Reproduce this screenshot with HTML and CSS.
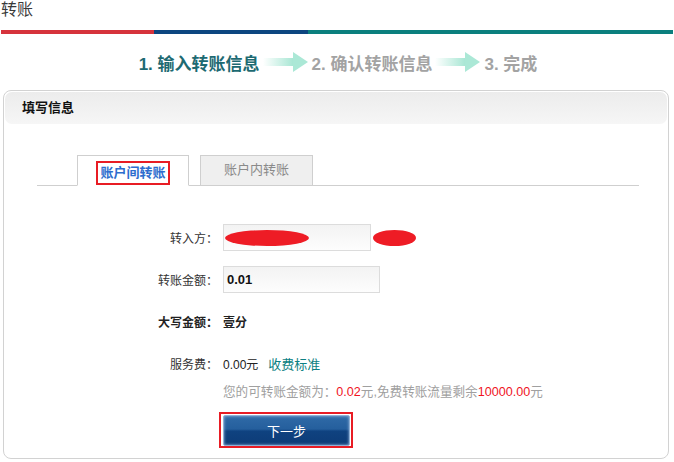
FILE: index.html
```html
<!DOCTYPE html>
<html lang="zh-CN">
<head>
<meta charset="utf-8">
<title>转账</title>
<link rel="stylesheet" href="styles.css">
</head>
<body>
<div class="page">
  <h1 class="title">转账</h1>
  <div class="bar"><span class="bar-red"></span><span class="bar-navy"></span><span class="bar-teal"></span></div>
  <div class="steps">
    <span class="step step-active">1. 输入转账信息</span>
    <svg class="arrow" width="46" height="22" viewBox="0 0 46 22">
      <defs><linearGradient id="ag1" x1="0" x2="1" y1="0" y2="0"><stop offset="0" stop-color="#ffffff"/><stop offset="1" stop-color="#a6e6d3"/></linearGradient></defs>
      <rect x="0" y="7" width="31" height="8" fill="url(#ag1)"/>
      <polygon points="30,1 45,11 30,21" fill="#abe8d6"/>
    </svg>
    <span class="step">2. 确认转账信息</span>
    <svg class="arrow" width="46" height="22" viewBox="0 0 46 22">
      <defs><linearGradient id="ag2" x1="0" x2="1" y1="0" y2="0"><stop offset="0" stop-color="#ffffff"/><stop offset="1" stop-color="#a6e6d3"/></linearGradient></defs>
      <rect x="0" y="7" width="31" height="8" fill="url(#ag2)"/>
      <polygon points="30,1 45,11 30,21" fill="#abe8d6"/>
    </svg>
    <span class="step">3. 完成</span>
  </div>
  <section class="panel">
    <div class="panel-head">填写信息</div>
    <div class="tabs">
      <div class="tab tab-active"><span class="mark">账户间转账</span></div>
      <div class="tab">账户内转账</div>
    </div>
    <div class="form">
      <div class="row">
        <span class="label">转入方：</span>
        <div class="input input-from"><span class="scribble scribble-a"></span></div>
        <span class="scribble scribble-b"></span>
      </div>
      <div class="row">
        <span class="label">转账金额：</span>
        <div class="input input-amount"><span class="amount">0.01</span></div>
      </div>
      <div class="row">
        <span class="label label-bold">大写金额：</span>
        <span class="value-bold">壹分</span>
      </div>
      <div class="row">
        <span class="label">服务费：</span>
        <span class="fee">0.00元</span>
        <a class="fee-link">收费标准</a>
      </div>
      <p class="info">您的可转账金额为：<span class="num">0.02</span>元,免费转账流量剩余<span class="num">10000.00</span>元</p>
      <div class="btn-mark"><button class="btn">下一步</button></div>
    </div>
  </section>
</div>
</body>
</html>
```
FILE: styles.css
```css
* { box-sizing: border-box; }
html, body { margin: 0; padding: 0; background: #fff; }
body {
  font-family: "Liberation Sans", "Noto Sans CJK SC", sans-serif;
  font-size: 12px;
  color: #333;
}
.page { width: 674px; }
.title {
  margin: 0;
  padding-left: 1px;
  height: 30px;
  font-size: 16px;
  line-height: 20px;
  font-weight: normal;
  color: #3a3a3a;
}
.bar { display: flex; height: 4px; margin-left: 1px; width: 672px; }
.bar-red { width: 153px; background: #d6333c; }
.bar-navy { width: 154px; background: #0d4680; }
.bar-teal { flex: 1; background: #0b7f7e; }

.steps {
  display: flex;
  justify-content: center;
  align-items: center;
  height: 30px;
  margin-top: 13px;
  padding-left: 2px;
}
.step {
  font-family: "Liberation Sans", "Noto Sans CJK SC", sans-serif;
  font-size: 17px;
  font-weight: bold;
  color: #a3a3a3;
}
.step-active { color: #1d6a72; }
.arrow { display: block; margin: 0 3px 0 3px; }

.panel {
  margin: 13px 0 0 3px;
  width: 666px;
  height: 369px;
  border: 1px solid #d2d2d2;
  border-radius: 8px;
}
.panel-head {
  margin: 1px;
  height: 32px;
  padding-left: 17px;
  border-radius: 7px;
  background: linear-gradient(#ececec, #f6f6f6);
  font-size: 13px;
  font-weight: bold;
  line-height: 32px;
  color: #111;
}
.tabs {
  display: flex;
  gap: 11px;
  height: 31px;
  margin: 31px 29px 0 33px;
  padding-left: 40px;
  border-bottom: 1px solid #cfcfcf;
}
.tab {
  width: 113px;
  height: 31px;
  border: 1px solid #cfcfcf;
  background: #efefef;
  color: #8a8a8a;
  font-size: 13px;
  text-align: center;
  line-height: 28px;
}
.tab-active {
  width: 112px;
  background: #fff;
  border-bottom-color: #fff;
  padding-top: 3px;
}
.mark {
  display: inline-block;
  width: 74px;
  height: 24px;
  border: 2px solid #e81c24;
  color: #2d6dce;
  font-weight: bold;
  line-height: 19px;
}

.form { padding-top: 23px; }
.row {
  display: flex;
  align-items: center;
  height: 27px;
  margin-top: 15px;
}
.label {
  width: 214px;
  text-align: right;
  margin-right: 5px;
  color: #333;
}
.label-bold, .value-bold { font-weight: bold; color: #222; }
.input {
  display: flex;
  align-items: center;
  height: 27px;
  border: 1px solid #dcdcdc;
  background: linear-gradient(#f3f3f3, #fdfdfd);
}
.input-from { width: 148px; }
.input-amount { width: 157px; }
.amount { margin-left: 3px; font-size: 13px; font-weight: bold; color: #111; }
.scribble { display: block; background: #ee1c25; border-radius: 50%; }
.scribble-a { width: 84px; height: 16px; margin-left: 1px; }
.scribble-b { width: 43px; height: 16px; margin-left: 2px; }
.fee { color: #222; }
.fee-link { margin-left: 10px; font-size: 13px; color: #0c7f82; }
.info {
  margin: 7px 0 0 219px;
  font-size: 12.6px;
  line-height: 16px;
  color: #a0a0a0;
}
.num { color: #f0141e; }
.btn-mark {
  display: inline-block;
  margin: 12px 0 0 215px;
  border: 2px solid #e81c24;
  padding: 1px 1px 0 2px;
}
.btn {
  display: block;
  width: 127px;
  height: 31px;
  border: 1px solid #8fb0d6;
  border-radius: 2px;
  background: linear-gradient(#2f6aa7 0%, #255f9d 45%, #0f4280 52%, #0d3c77 100%);
  box-shadow: inset 0 0 3px #9fbde0;
  color: #fff;
  font-family: "Noto Sans CJK SC", sans-serif;
  font-size: 13px;
  padding: 0;
}
```
